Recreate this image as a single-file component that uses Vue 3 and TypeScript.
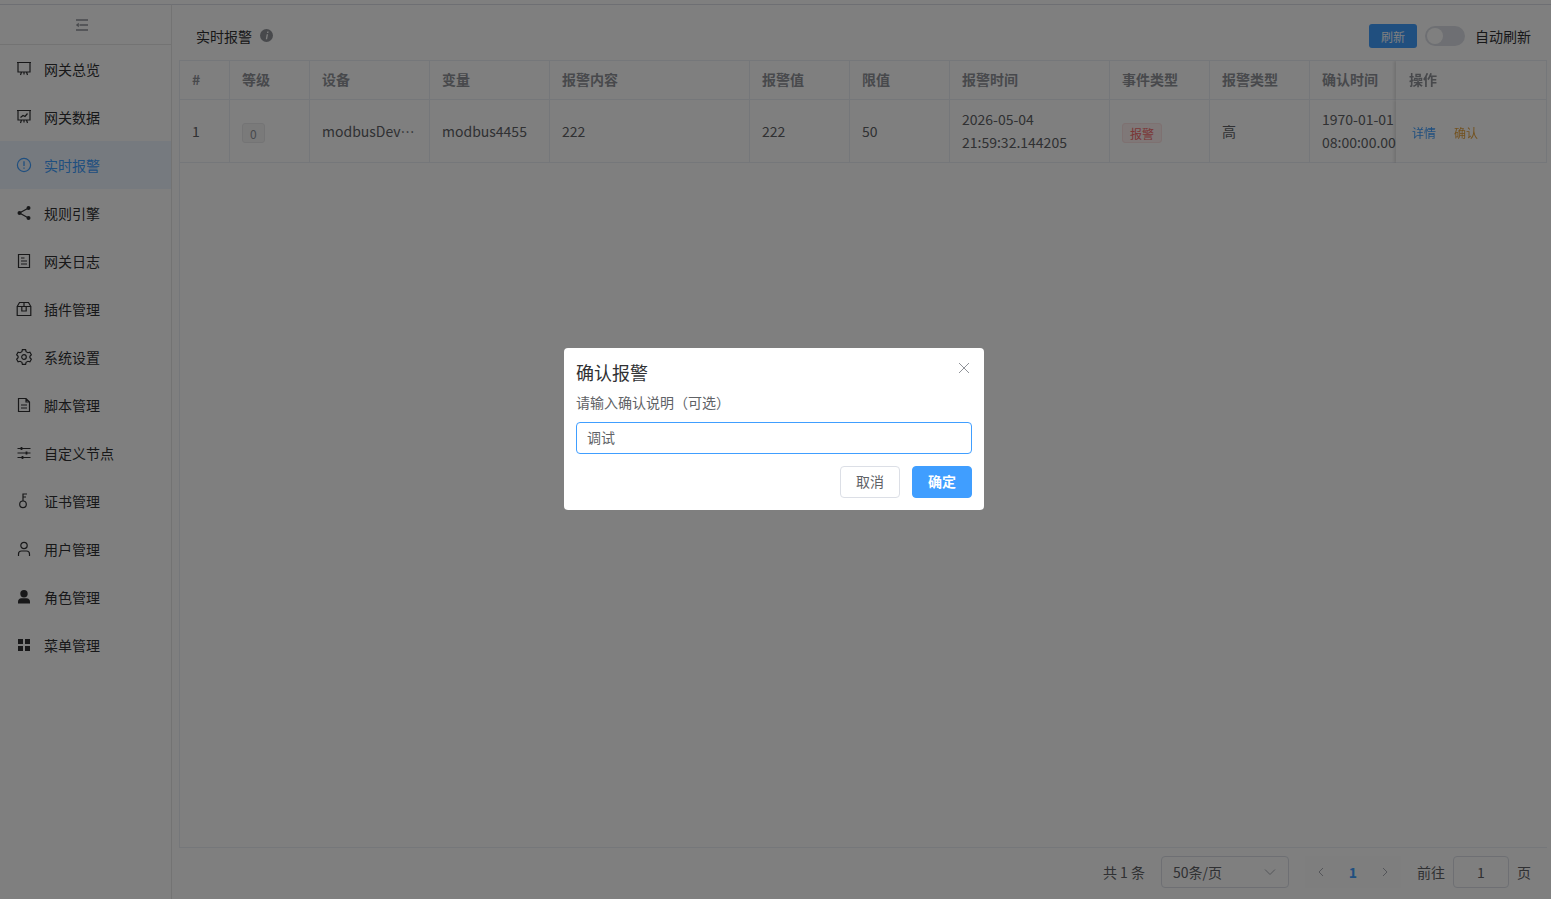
<script setup lang="ts">
import { ref } from 'vue'

const menus = [
  { key: 'overview', label: '网关总览' },
  { key: 'data', label: '网关数据' },
  { key: 'alarm', label: '实时报警' },
  { key: 'rule', label: '规则引擎' },
  { key: 'log', label: '网关日志' },
  { key: 'plugin', label: '插件管理' },
  { key: 'setting', label: '系统设置' },
  { key: 'script', label: '脚本管理' },
  { key: 'node', label: '自定义节点' },
  { key: 'cert', label: '证书管理' },
  { key: 'user', label: '用户管理' },
  { key: 'role', label: '角色管理' },
  { key: 'menu', label: '菜单管理' },
]

const columns = [
  { label: '#', width: 50 },
  { label: '等级', width: 80 },
  { label: '设备', width: 120 },
  { label: '变量', width: 120 },
  { label: '报警内容', width: 200 },
  { label: '报警值', width: 100 },
  { label: '限值', width: 100 },
  { label: '报警时间', width: 160 },
  { label: '事件类型', width: 100 },
  { label: '报警类型', width: 100 },
  { label: '确认时间', width: 160 },
]

const remark = ref('调试')
const autoRefresh = ref(false)
</script>

<template>
  <div class="layout">
    <aside class="sidebar">
      <div class="collapse">
        <svg width="14" height="14" viewBox="0 0 14 14" fill="none" stroke="currentColor" stroke-width="1.7">
          <path d="M1 2h12M4.500 7H13M1 12h12" />
          <path d="M.8 7 3.800 4.800v4.400z" fill="currentColor" stroke="none" />
        </svg>
      </div>
      <nav class="menu">
        <div v-for="m in menus" :key="m.key" class="menu-item" :class="{ active: m.key === 'alarm' }">
          <svg class="menu-icon" viewBox="0 0 16 16" fill="none" stroke="currentColor" stroke-width="1.2">
            <template v-if="m.key === 'overview'">
              <path d="M1 1.500h14M2 1.500V11h12V1.500M5.500 11l-1 3M10.500 11l1 3M8 11v2.500" />
            </template>
            <template v-else-if="m.key === 'data'">
              <path d="M1 1.500h14M2 1.500V11h12V1.500M5.500 11l-1 3M10.500 11l1 3M8 11v2.500M4.500 8.500l2.500-2 2 1 2.500-3" />
            </template>
            <template v-else-if="m.key === 'alarm'">
              <circle cx="8" cy="8" r="6.600" />
              <path d="M8 4.300V9M8 10.400v1.300" stroke-width="1.300" />
            </template>
            <template v-else-if="m.key === 'rule'">
              <path d="M12.500 3 3.500 8l9 5" />
              <circle cx="12.500" cy="3" r="2" fill="currentColor" stroke="none" />
              <circle cx="3.500" cy="8" r="2" fill="currentColor" stroke="none" />
              <circle cx="12.500" cy="13" r="2" fill="currentColor" stroke="none" />
            </template>
            <template v-else-if="m.key === 'log'">
              <path d="M2.500 1.500h11v13h-11zM5 5h3.500M5 8h6M5 11h6" />
            </template>
            <template v-else-if="m.key === 'plugin'">
              <path d="M1.200 5.500h13.600v9H1.200zM1.200 5.500 3.500 1.500h9l2.300 4M5.800 5.500v4.500h4.400V5.500M8 1.500v4" />
            </template>
            <template v-else-if="m.key === 'setting'">
              <path d="M6.400 1.200h3.200l.5 2 1.800 1 2-.6 1.500 2.700-1.500 1.400v1.600l1.500 1.400-1.500 2.700-2-.6-1.800 1-.5 2H6.400l-.5-2-1.800-1-2 .6L.6 10.700l1.500-1.400V7.700L.6 6.300l1.500-2.700 2 .6 1.800-1z" transform="translate(0 -.5)" />
              <circle cx="8" cy="8" r="2.300" />
            </template>
            <template v-else-if="m.key === 'script'">
              <path d="M2.500 1.500h7.500l3.500 3.500v9.500h-11zM10 1.500V5h3.500M5 8h6M5 11h6" />
            </template>
            <template v-else-if="m.key === 'node'">
              <path d="M1.500 3.500h13M1.500 8h13M1.500 12.500h13" />
              <path d="M5.500 2v3M10.500 6.500v3M6.500 11v3" stroke-width="1.800" />
            </template>
            <template v-else-if="m.key === 'cert'">
              <circle cx="7" cy="11.300" r="3.300" />
              <path d="M7 8V1h4M7 4h3" />
            </template>
            <template v-else-if="m.key === 'user'">
              <circle cx="8" cy="4.500" r="3.200" />
              <path d="M2.500 15v-2c0-2 1.500-3 3-3h5c1.500 0 3 1 3 3v2" />
            </template>
            <template v-else-if="m.key === 'role'">
              <circle cx="8" cy="4.700" r="3.700" fill="currentColor" stroke="none" />
              <path d="M2 14.500v-2c0-2 1.500-3.300 3.300-3.300h5.400c1.800 0 3.300 1.300 3.300 3.300v2z" fill="currentColor" stroke="none" />
            </template>
            <template v-else>
              <path d="M2 2h5v5H2zM9 2h5v5H9zM2 9h5v5H2zM9 9h5v5H9z" fill="currentColor" stroke="none" />
            </template>
          </svg>
          <span>{{ m.label }}</span>
        </div>
      </nav>
    </aside>

    <main class="content">
      <header class="toolbar">
        <div class="title">
          <span>实时报警</span>
          <svg class="info" width="13" height="13" viewBox="0 0 13 13">
            <circle cx="6.500" cy="6.500" r="6.500" fill="currentColor" />
            <path d="M7.300 2.400h1.300l-.3 1.500H7zM6.700 5.200h1.300L7.100 10.200H5.800z" fill="#fff" />
          </svg>
        </div>
        <div class="actions">
          <button class="refresh">刷新</button>
          <button class="switch" :class="{ on: autoRefresh }" @click="autoRefresh = !autoRefresh"><i></i></button>
          <span class="switch-label">自动刷新</span>
        </div>
      </header>

      <div class="table-wrap">
        <table class="table">
          <colgroup>
            <col v-for="c in columns" :key="c.label" :style="{ width: c.width + 'px' }" />
            <col style="width: 151px" />
          </colgroup>
          <thead>
            <tr>
              <th v-for="c in columns" :key="c.label">{{ c.label }}</th>
              <th class="fixed">操作</th>
            </tr>
          </thead>
          <tbody>
            <tr>
              <td>1</td>
              <td><span class="tag gray">0</span></td>
              <td><div class="ellipsis">modbusDevice01</div></td>
              <td>modbus4455</td>
              <td>222</td>
              <td>222</td>
              <td>50</td>
              <td>2026-05-04 21:59:32.144205</td>
              <td><span class="tag red">报警</span></td>
              <td>高</td>
              <td><div class="nowrap">1970-01-01<br />08:00:00.000000</div></td>
              <td class="fixed">
                <a class="link blue">详情</a>
                <a class="link orange">确认</a>
              </td>
            </tr>
          </tbody>
        </table>
      </div>

      <footer class="pager">
        <span class="total">共 1 条</span>
        <div class="select">
          <span>50条/页</span>
          <svg width="12" height="12" viewBox="0 0 12 12" fill="none" stroke="currentColor" stroke-width="1">
            <path d="M1 3.500 6 8.500l5-5" />
          </svg>
        </div>
        <div class="pages">
          <svg width="10" height="10" viewBox="0 0 10 10" fill="none" stroke="currentColor"><path d="M7 1 3 5l4 4" /></svg>
          <b>1</b>
          <svg width="10" height="10" viewBox="0 0 10 10" fill="none" stroke="currentColor"><path d="M3 1l4 4-4 4" /></svg>
        </div>
        <span class="goto">前往</span>
        <div class="page-input">1</div>
        <span class="goto-end">页</span>
      </footer>
    </main>

    <div class="overlay">
      <div class="dialog">
        <div class="dialog-title">
          <span>确认报警</span>
          <svg class="close" width="12" height="12" viewBox="0 0 12 12" fill="none" stroke="currentColor" stroke-width="1">
            <path d="M1 1l10 10M11 1 1 11" />
          </svg>
        </div>
        <p class="dialog-text">请输入确认说明（可选）</p>
        <input v-model="remark" class="dialog-input" type="text" />
        <div class="dialog-footer">
          <button class="btn">取消</button>
          <button class="btn primary">确定</button>
        </div>
      </div>
    </div>
  </div>
</template>

<style>
html,
body {
  margin: 0;
  height: 100%;
  overflow: hidden;
}
</style>

<style scoped>
.layout {
  display: flex;
  height: 899px;
  box-sizing: border-box;
  padding-top: 4px;
  background: #fff;
  font-family: "Noto Sans CJK SC", "Noto Sans", sans-serif;
  font-size: 14px;
  color: #606266;
  position: relative;
}

.sidebar {
  width: 172px;
  flex-shrink: 0;
  box-sizing: border-box;
  border-right: 1px solid #e6e6e6;
  border-top: 1px solid #dcdfe6;
}

.collapse {
  height: 39px;
  display: flex;
  align-items: center;
  justify-content: center;
  padding-right: 8px;
  border-bottom: 1px solid #e6e6e6;
  color: #909399;
}

.menu-item {
  height: 48px;
  display: flex;
  align-items: center;
  padding-left: 16px;
  color: #303133;
  font-size: 14px;
  gap: 12px;
  margin-right: -1px;
}

.menu-item.active {
  background: #ecf5ff;
  color: #409eff;
  margin-right: 0;
}

.menu-icon {
  width: 16px;
  height: 16px;
  flex-shrink: 0;
  margin-top: -1px;
}

.content {
  flex: 1;
  min-width: 0;
  display: flex;
  flex-direction: column;
  padding: 0 4px 0 7px;
  border-top: 1px solid #dcdfe6;
}

.toolbar {
  height: 55px;
  display: flex;
  align-items: center;
  justify-content: space-between;
  padding: 5px 16px 0 17px;
  box-sizing: border-box;
  flex-shrink: 0;
}

.title {
  display: flex;
  align-items: center;
  gap: 8px;
  color: #303133;
  margin-top: -1px;
}

.title span {
  position: relative;
  top: 1px;
}

.info {
  color: #909399;
  margin-top: 1px;
}

.actions {
  display: flex;
  align-items: center;
  margin-top: 2px;
}

.refresh {
  width: 48px;
  height: 24px;
  border: 0;
  border-radius: 3px;
  background: #409eff;
  color: #fff;
  font: inherit;
  font-size: 12px;
  padding: 0;
}

.switch {
  width: 40px;
  height: 20px;
  margin: 0 10px 0 8px;
  padding: 0;
  border: 0;
  border-radius: 10px;
  background: #dcdfe6;
  position: relative;
}

.switch i {
  position: absolute;
  left: 2px;
  top: 2px;
  width: 16px;
  height: 16px;
  border-radius: 50%;
  background: #fff;
}

.switch-label {
  color: #303133;
}

.table-wrap {
  flex: 1;
  min-height: 0;
  overflow: hidden;
  border: 1px solid #ebeef5;
  border-width: 1px 0 1px 1px;
}

.table {
  width: 1411px;
  table-layout: fixed;
  border-collapse: separate;
  border-spacing: 0;
}

th,
td {
  box-sizing: border-box;
  padding: 0 12px;
  text-align: left;
  border-right: 1px solid #ebeef5;
  border-bottom: 1px solid #ebeef5;
  line-height: 23px;
  background: #fff;
}

th {
  height: 39px;
  padding-bottom: 2px;
  font-weight: 700;
  color: #909399;
}

td {
  height: 63px;
}

.fixed {
  position: sticky;
  right: 0;
  box-shadow: -2px 0 3px rgba(0, 0, 0, 0.12);
  clip-path: inset(0 0 0 -5px);
}

th.fixed {
  padding-left: 13px;
}

td.fixed {
  padding-left: 14px;
}

.ellipsis {
  overflow: hidden;
  white-space: nowrap;
  text-overflow: ellipsis;
}

.nowrap {
  white-space: nowrap;
  overflow: hidden;
}

.tag {
  display: inline-block;
  height: 20px;
  line-height: 20px;
  padding: 0 7px;
  border-radius: 3px;
  font-size: 12px;
  box-sizing: border-box;
  border: 1px solid;
  vertical-align: middle;
}

.tag.gray {
  background: #f4f4f5;
  border-color: #e9e9eb;
  color: #909399;
}

.tag.red {
  background: #fef0f0;
  border-color: #fde2e2;
  color: #f56c6c;
}

.link {
  font-size: 12px;
  position: relative;
  top: 1px;
  margin-left: 2px;
}

.link.blue {
  color: #409eff;
}

.link.orange {
  color: #e6a23c;
  margin-left: 18px;
}

.pager {
  height: 51px;
  flex-shrink: 0;
  box-sizing: border-box;
  display: flex;
  align-items: center;
  justify-content: flex-end;
  padding: 0 16px 4px 0;
  color: #606266;
}

.total {
  margin-right: 16px;
}

.select {
  width: 128px;
  height: 32px;
  box-sizing: border-box;
  border: 1px solid #dcdfe6;
  border-radius: 4px;
  display: flex;
  align-items: center;
  justify-content: space-between;
  padding: 0 12px 0 11px;
  color: #606266;
  margin-right: 16px;
}

.select svg {
  color: #a8abb2;
}

.pages {
  width: 96px;
  height: 32px;
  background: #fcfcfc;
  display: flex;
  align-items: center;
  justify-content: space-between;
  padding: 0 11px;
  box-sizing: border-box;
  color: #a8abb2;
  margin-right: 16px;
}

.pages b {
  color: #409eff;
  font-size: 14px;
}

.goto {
  margin-right: 8px;
}

.page-input {
  width: 56px;
  height: 32px;
  box-sizing: border-box;
  border: 1px solid #dcdfe6;
  border-radius: 4px;
  display: flex;
  align-items: center;
  justify-content: center;
  margin-right: 8px;
}

.overlay {
  position: fixed;
  inset: 0;
  background: rgba(0, 0, 0, 0.5);
  display: flex;
  justify-content: center;
  align-items: flex-start;
  padding: 348px 3px 0 0;
}

.dialog {
  width: 420px;
  height: 162px;
  box-sizing: border-box;
  background: #fff;
  border-radius: 4px;
  padding: 12px;
  display: flex;
  flex-direction: column;
}

.dialog-title {
  display: flex;
  justify-content: space-between;
  font-size: 18px;
  line-height: 24px;
  color: #303133;
}

.close {
  color: #909399;
  margin-right: 2px;
  margin-top: 2px;
}

.dialog-text {
  margin: 8px 0 0;
  line-height: 20px;
  color: #606266;
}

.dialog-input {
  margin-top: 10px;
  height: 32px;
  box-sizing: border-box;
  border: 1px solid #409eff;
  border-radius: 4px;
  outline: none;
  padding: 0 10px 2px;
  font: inherit;
  color: #606266;
}

.dialog-footer {
  display: flex;
  justify-content: flex-end;
  gap: 12px;
  margin-top: 12px;
}

.btn {
  width: 60px;
  height: 32px;
  padding: 0 0 2px;
  border: 1px solid #dcdfe6;
  border-radius: 4px;
  background: #fff;
  color: #606266;
  font: inherit;
}

.btn.primary {
  background: #409eff;
  border-color: #409eff;
  color: #fff;
  font-weight: 700;
}
</style>
